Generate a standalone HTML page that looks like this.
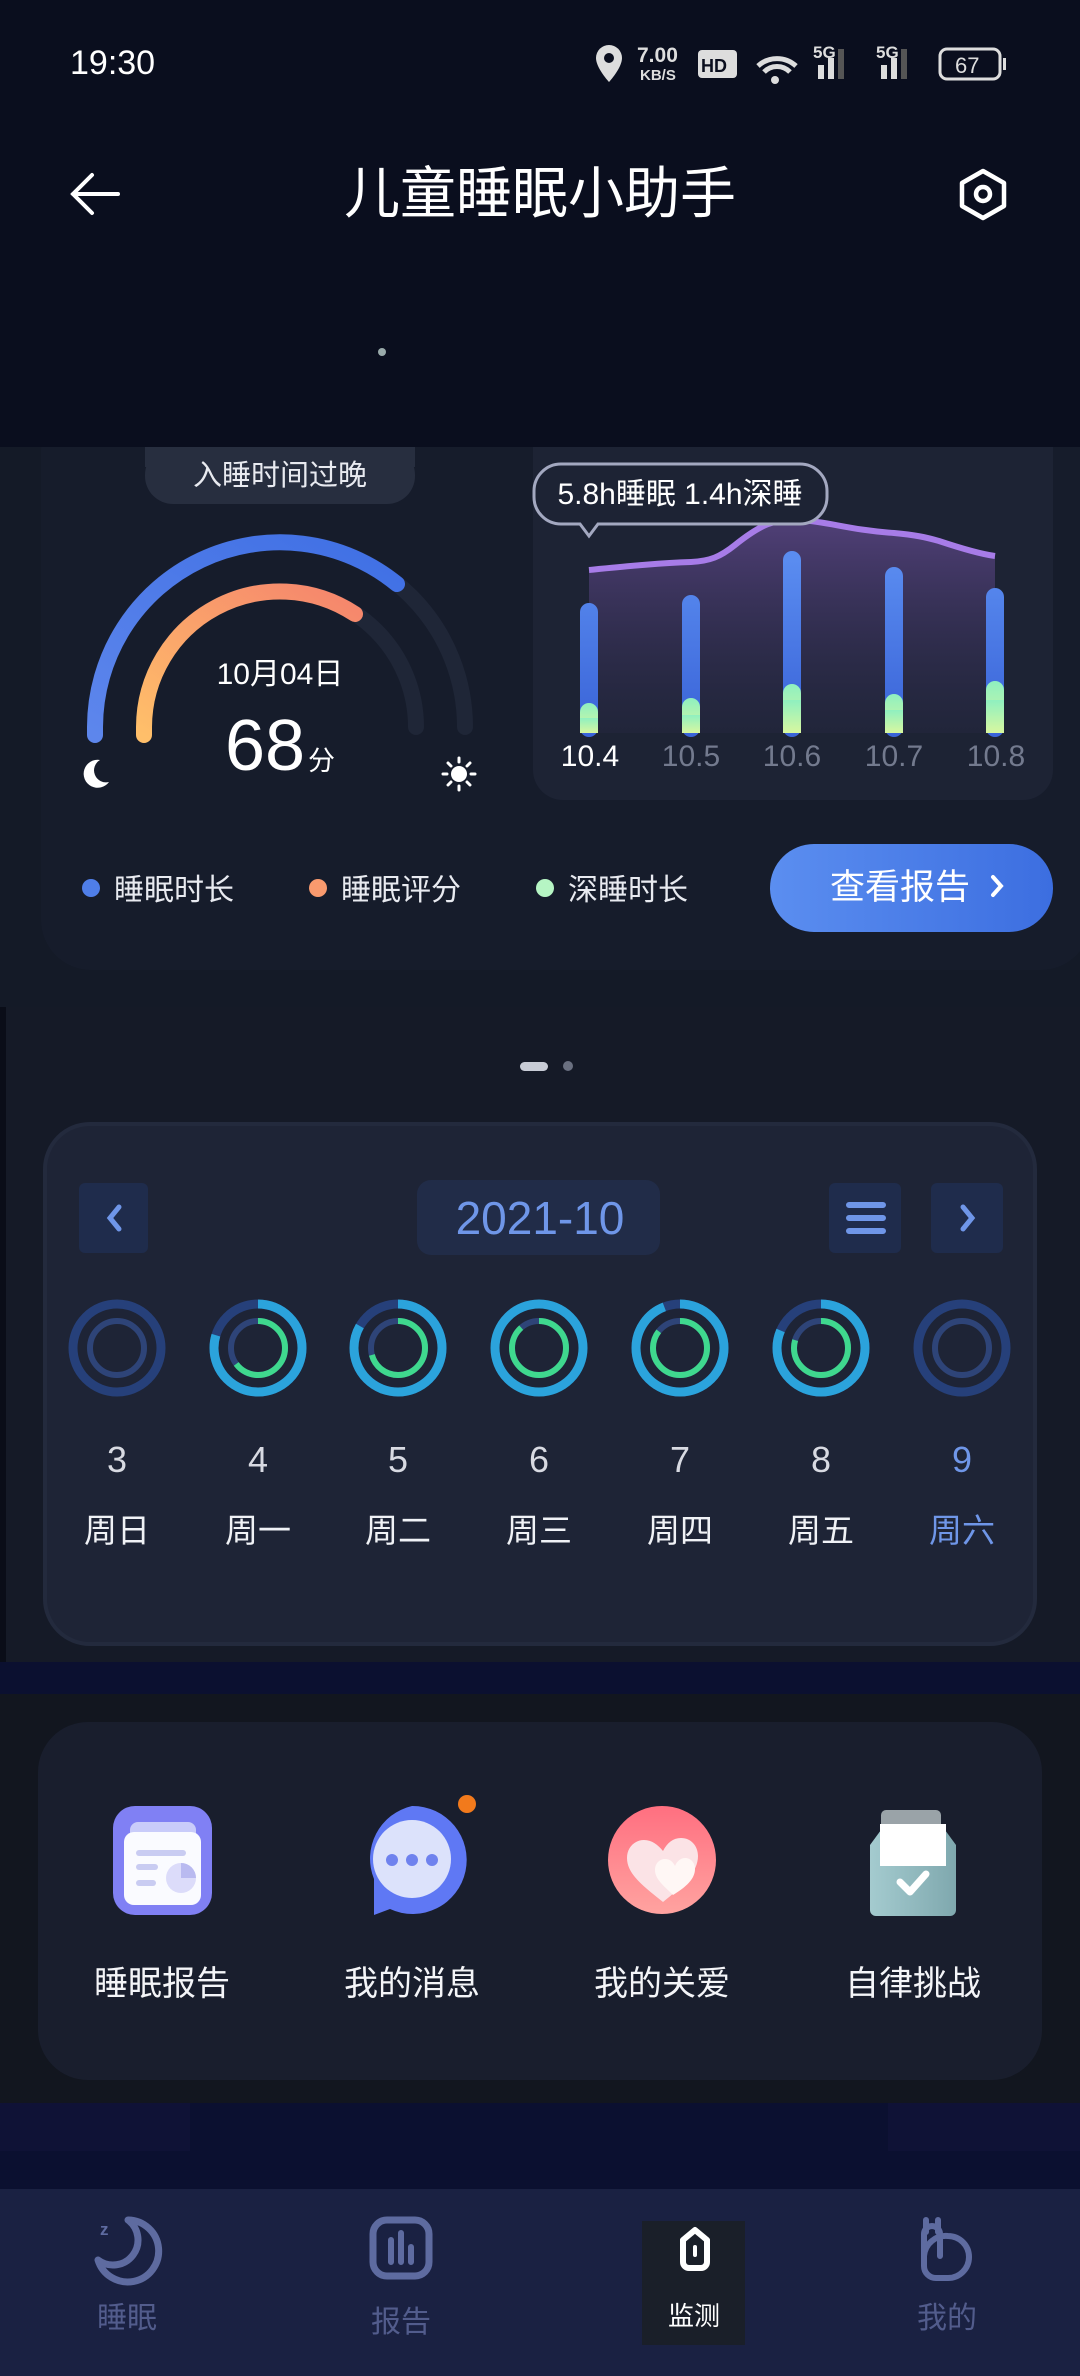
<!DOCTYPE html>
<html><head><meta charset="utf-8"><style>
html,body{margin:0;padding:0;background:#0a0e1e;}
svg{display:block;}
text{font-family:"Liberation Sans","Noto Sans CJK SC",sans-serif;}
</style></head><body>
<svg width="1080" height="2376" viewBox="0 0 1080 2376" xmlns="http://www.w3.org/2000/svg">
<defs>
<linearGradient id="org" x1="0" y1="1" x2="1" y2="0"><stop offset="0" stop-color="#ffbf6a"/><stop offset="1" stop-color="#f5846c"/></linearGradient>
<linearGradient id="blu" x1="0" y1="1" x2="1" y2="0"><stop offset="0" stop-color="#5d86ec"/><stop offset="1" stop-color="#3f6fe4"/></linearGradient>
<linearGradient id="btn" x1="0" y1="0" x2="1" y2="0"><stop offset="0" stop-color="#5b8ef0"/><stop offset="1" stop-color="#3c6ee0"/></linearGradient>
<linearGradient id="bar" x1="0" y1="0" x2="0" y2="1"><stop offset="0" stop-color="#5a8cf0"/><stop offset="1" stop-color="#3a64d8"/></linearGradient>
<linearGradient id="grn" x1="0" y1="0" x2="0" y2="1"><stop offset="0" stop-color="#8ff0c0"/><stop offset="1" stop-color="#d8f7a0"/></linearGradient>
<linearGradient id="area" x1="0" y1="0" x2="0" y2="1"><stop offset="0" stop-color="#5a4584" stop-opacity="0.85"/><stop offset="1" stop-color="#2a2a48" stop-opacity="0.3"/></linearGradient>
<linearGradient id="heart" x1="0" y1="0" x2="0" y2="1"><stop offset="0" stop-color="#ff6f80"/><stop offset="1" stop-color="#ffa3a0"/></linearGradient>
<linearGradient id="box" x1="0" y1="0" x2="1" y2="0"><stop offset="0" stop-color="#a4cbcf"/><stop offset="1" stop-color="#7fa8ae"/></linearGradient>
</defs>

<!-- section 1 -->
<rect x="0" y="447" width="1080" height="560" fill="#141a27"/>
<rect x="41" y="400" width="1050" height="570" rx="50" fill="#161c2b"/>
<rect x="533" y="400" width="520" height="400" rx="30" fill="#1d2334"/>

<!-- top -->
<rect x="0" y="0" width="1080" height="447" fill="#0a0e1e"/>
<text x="70" y="74" font-size="34" fill="#fff">19:30</text>
<path d="M609 45a13 13 0 0 1 13 13c0 10-13 24-13 24s-13-14-13-24a13 13 0 0 1 13-13z" fill="#ddd"/><circle cx="609" cy="58" r="5" fill="#0a0e1e"/>
<text x="637" y="62" font-size="21" fill="#ddd" font-weight="bold">7.00</text>
<text x="640" y="80" font-size="15" fill="#ddd" font-weight="bold">KB/S</text>
<rect x="698" y="50" width="39" height="28" rx="4" fill="#ddd"/><text x="701" y="72" font-size="18" font-weight="bold" fill="#0a0e1e">HD</text>
<path d="M758 66a28 28 0 0 1 38 0M764 72a18 18 0 0 1 26 0" stroke="#ddd" stroke-width="5" fill="none"/><circle cx="775" cy="80" r="4" fill="#ddd"/>
<text x="813" y="58" font-size="17" font-weight="bold" fill="#ddd">5G</text>
<rect x="818" y="65" width="6" height="14" fill="#ddd"/><rect x="828" y="58" width="6" height="21" fill="#ddd"/><rect x="838" y="49" width="6" height="30" fill="#555"/>
<text x="876" y="58" font-size="17" font-weight="bold" fill="#ddd">5G</text>
<rect x="881" y="65" width="6" height="14" fill="#ddd"/><rect x="891" y="58" width="6" height="21" fill="#ddd"/><rect x="901" y="49" width="6" height="30" fill="#555"/>
<rect x="940" y="49" width="60" height="30" rx="7" fill="none" stroke="#ddd" stroke-width="3"/><rect x="1003" y="58" width="3" height="12" fill="#ddd"/>
<text x="955" y="73" font-size="22" fill="#ddd">67</text>

<path d="M118 194H73M92 175L73 194L92 213" stroke="#fff" stroke-width="4" fill="none" stroke-linecap="round"/>
<text x="540" y="213" font-size="56" fill="#fff" text-anchor="middle">儿童睡眠小助手</text>
<path d="M983 171L1004 183V206L983 218L962 206V183Z" stroke="#fff" stroke-width="4.5" fill="none" stroke-linejoin="round"/>
<circle cx="983" cy="194" r="7" stroke="#fff" stroke-width="4.5" fill="none"/>
<circle cx="382" cy="352" r="4" fill="#9aa"/>

<rect x="145" y="447" width="270" height="57" rx="28" fill="#272e3f"/>
<rect x="145" y="447" width="270" height="20" fill="#272e3f"/>
<text x="280" y="485" font-size="29" fill="#e8eaf0" text-anchor="middle">入睡时间过晚</text>
<!-- gauge -->
<path d="M95 727A185 185 0 0 1 465 727" stroke="#1f2637" stroke-width="16" fill="none" stroke-linecap="round"/>
<path d="M144 727A136 136 0 0 1 416 727" stroke="#1f2637" stroke-width="16" fill="none" stroke-linecap="round"/>
<path d="M95 735L95 727A185 185 0 0 1 397 584" stroke="url(#blu)" stroke-width="16" fill="none" stroke-linecap="round"/>
<path d="M144 735L144 727A136 136 0 0 1 355 614" stroke="url(#org)" stroke-width="16" fill="none" stroke-linecap="round"/>
<text x="280" y="684" font-size="30" fill="#fff" text-anchor="middle">10月04日</text>
<text x="265" y="770" font-size="72" fill="#fff" text-anchor="middle">68</text>
<text x="308" y="770" font-size="27" fill="#fff">分</text>
<path d="M100 760a14 14 0 1 0 9 22a12 12 0 0 1 -9 -22z" fill="#fff"/>
<circle cx="459" cy="774" r="8" fill="#fff"/>
<g stroke="#fff" stroke-width="3" stroke-linecap="round"><path d="M459 758v4M459 786v4M443 774h4M471 774h4M448 763l3 3M467 782l3 3M448 785l3-3M467 766l3-3"/></g>
<!-- chart -->
<path d="M589 570C630 566 660 563 691 562C710 561 720 557 735 545C760 525 775 518 800 520C830 522 850 530 894 533C915 535 925 537 939 541C960 548 980 554 995 556L995 733L589 733Z" fill="url(#area)"/>
<path d="M589 570C630 566 660 563 691 562C710 561 720 557 735 545C760 525 775 518 800 520C830 522 850 530 894 533C915 535 925 537 939 541C960 548 980 554 995 556" stroke="#a77ce8" stroke-width="6" fill="none"/>
<g stroke-linecap="round" stroke-width="18">
<path d="M589 612V728M691 604V728M792 560V728M894 576V728M995 597V728" stroke="url(#bar)"/>
</g>
<rect x="580" y="703" width="18" height="30" rx="9" fill="url(#grn)"/><rect x="580" y="718" width="18" height="15" fill="url(#grn)"/>
<rect x="682" y="698" width="18" height="35" rx="9" fill="url(#grn)"/><rect x="682" y="715" width="18" height="18" fill="url(#grn)"/>
<rect x="783" y="684" width="18" height="49" rx="9" fill="url(#grn)"/><rect x="783" y="700" width="18" height="33" fill="url(#grn)"/>
<rect x="885" y="694" width="18" height="39" rx="9" fill="url(#grn)"/><rect x="885" y="710" width="18" height="23" fill="url(#grn)"/>
<rect x="986" y="681" width="18" height="52" rx="9" fill="url(#grn)"/><rect x="986" y="700" width="18" height="33" fill="url(#grn)"/>
<path d="M561 464H800a27 27 0 0 1 27 27v6a27 27 0 0 1 -27 27H598L589 536L580 524H561a27 27 0 0 1 -27 -27v-6a27 27 0 0 1 27 -27Z" fill="#1d2334" stroke="#a3a8c0" stroke-width="3"/>
<text x="680" y="504" font-size="30" fill="#fff" text-anchor="middle">5.8h睡眠 1.4h深睡</text>
<g font-size="30" text-anchor="middle"><text x="590" y="766" fill="#fff">10.4</text><text x="691" y="766" fill="#737a8e">10.5</text><text x="792" y="766" fill="#737a8e">10.6</text><text x="894" y="766" fill="#737a8e">10.7</text><text x="996" y="766" fill="#737a8e">10.8</text></g>
<!-- legend -->
<circle cx="91" cy="888" r="9" fill="#4f7ee8"/><text x="114" y="900" font-size="30" fill="#e8eaf0">睡眠时长</text>
<circle cx="318" cy="888" r="9" fill="#f99a6e"/><text x="341" y="900" font-size="30" fill="#e8eaf0">睡眠评分</text>
<circle cx="545" cy="888" r="9" fill="#b6f5c4"/><text x="568" y="900" font-size="30" fill="#e8eaf0">深睡时长</text>
<rect x="770" y="844" width="283" height="88" rx="44" fill="url(#btn)"/>
<text x="900" y="899" font-size="35" fill="#fff" text-anchor="middle">查看报告</text>
<path d="M993 877l8 9l-8 9" stroke="#fff" stroke-width="4" fill="none" stroke-linecap="round"/>

<!-- section 2 -->
<rect x="0" y="1007" width="1080" height="655" fill="#151a27"/>
<rect x="0" y="1007" width="6" height="655" fill="#0a0d18"/>
<rect x="520" y="1062" width="28" height="9" rx="4.5" fill="#c8ccd6"/><circle cx="568" cy="1066" r="5" fill="#6a7080"/>
<rect x="45" y="1124" width="990" height="520" rx="45" fill="#1e2436" stroke="#232a3d" stroke-width="4"/>
<rect x="79" y="1183" width="69" height="70" rx="6" fill="#1f2c4c"/>
<path d="M119 1207l-9 11l9 11" stroke="#6f96e8" stroke-width="5" fill="none" stroke-linecap="round"/>
<rect x="417" y="1180" width="243" height="75" rx="14" fill="#212c48"/>
<text x="540" y="1234" font-size="46" fill="#6f96e8" text-anchor="middle">2021-10</text>
<rect x="829" y="1183" width="72" height="70" rx="6" fill="#1f2c4c"/>
<path d="M849 1205h34M849 1218h34M849 1231h34" stroke="#6f96e8" stroke-width="6" stroke-linecap="round"/>
<rect x="931" y="1183" width="72" height="70" rx="6" fill="#1f2c4c"/>
<path d="M963 1207l9 11l-9 11" stroke="#6f96e8" stroke-width="5" fill="none" stroke-linecap="round"/>
<g fill="none">
<circle cx="117" cy="1348" r="44" stroke="#26407a" stroke-width="9"/><circle cx="117" cy="1348" r="27" stroke="#2e4478" stroke-width="6"/>
<circle cx="962" cy="1348" r="44" stroke="#26407a" stroke-width="9"/><circle cx="962" cy="1348" r="27" stroke="#2e4478" stroke-width="6"/>
</g>
<g fill="none">
<g transform="translate(258 1348)"><circle r="44" stroke="#26407a" stroke-width="9"/><circle r="44" stroke="#2ba3dc" stroke-width="9" stroke-dasharray="220 300" transform="rotate(-90)"/><circle r="27" stroke="#2e4478" stroke-width="6"/><circle r="27" stroke="#3fd88e" stroke-width="6" stroke-dasharray="110 200" transform="rotate(-90)"/></g>
<g transform="translate(398 1348)"><circle r="44" stroke="#26407a" stroke-width="9"/><circle r="44" stroke="#2ba3dc" stroke-width="9" stroke-dasharray="230 300" transform="rotate(-90)"/><circle r="27" stroke="#2e4478" stroke-width="6"/><circle r="27" stroke="#3fd88e" stroke-width="6" stroke-dasharray="120 200" transform="rotate(-90)"/></g>
<g transform="translate(539 1348)"><circle r="44" stroke="#2ba3dc" stroke-width="9"/><circle r="27" stroke="#2e4478" stroke-width="6"/><circle r="27" stroke="#3fd88e" stroke-width="6" stroke-dasharray="150 200" transform="rotate(-90)"/></g>
<g transform="translate(680 1348)"><circle r="44" stroke="#26407a" stroke-width="9"/><circle r="44" stroke="#2ba3dc" stroke-width="9" stroke-dasharray="260 300" transform="rotate(-90)"/><circle r="27" stroke="#2e4478" stroke-width="6"/><circle r="27" stroke="#3fd88e" stroke-width="6" stroke-dasharray="145 200" transform="rotate(-90)"/></g>
<g transform="translate(821 1348)"><circle r="44" stroke="#26407a" stroke-width="9"/><circle r="44" stroke="#2ba3dc" stroke-width="9" stroke-dasharray="225 300" transform="rotate(-90)"/><circle r="27" stroke="#2e4478" stroke-width="6"/><circle r="27" stroke="#3fd88e" stroke-width="6" stroke-dasharray="135 200" transform="rotate(-90)"/></g>
</g>
<g font-size="36" fill="#d8dae2" text-anchor="middle">
<text x="117" y="1472">3</text><text x="258" y="1472">4</text><text x="398" y="1472">5</text><text x="539" y="1472">6</text><text x="680" y="1472">7</text><text x="821" y="1472">8</text><text x="962" y="1472" fill="#6f96e8">9</text>
</g>
<g font-size="33" fill="#f0f2f6" text-anchor="middle">
<text x="117" y="1542">周日</text><text x="258" y="1542">周一</text><text x="398" y="1542">周二</text><text x="539" y="1542">周三</text><text x="680" y="1542">周四</text><text x="821" y="1542">周五</text><text x="962" y="1542" fill="#6f96e8">周六</text>
</g>

<rect x="0" y="1662" width="1080" height="32" fill="#0b1030"/>
<rect x="0" y="1694" width="1080" height="409" fill="#12161f"/>
<rect x="38" y="1722" width="1004" height="358" rx="50" fill="#191e2d"/>
<rect x="113" y="1806" width="99" height="109" rx="22" fill="#8080f4"/>
<rect x="130" y="1822" width="66" height="22" rx="8" fill="#c9ccfa"/>
<rect x="124" y="1832" width="77" height="73" rx="10" fill="#fafbff"/>
<rect x="136" y="1850" width="50" height="6" rx="3" fill="#c9ccf2"/><rect x="136" y="1864" width="22" height="6" rx="3" fill="#c9ccf2"/><rect x="136" y="1880" width="20" height="6" rx="3" fill="#c9ccf2"/>
<circle cx="181" cy="1878" r="15" fill="#dcdcfa"/><path d="M181 1878V1863A15 15 0 0 1 196 1878Z" fill="#b9baf0"/>
<path d="M412 1806a54 54 0 1 1 -22 103l-16 6v-36a54 54 0 0 1 38 -73z" fill="#5f78f4"/>
<ellipse cx="412" cy="1859" rx="39" ry="39" fill="#dce2fb"/>
<circle cx="392" cy="1860" r="6" fill="#6f82ee"/><circle cx="412" cy="1860" r="6" fill="#6f82ee"/><circle cx="432" cy="1860" r="6" fill="#6f82ee"/>
<circle cx="467" cy="1804" r="9" fill="#f27a1c"/>
<ellipse cx="662" cy="1860" rx="54" ry="54" fill="url(#heart)"/>
<path d="M663 1902c-20-16-36-28-36-44c0-11 8-18 17-18c8 0 14 5 19 11c4-8 10-13 18-13c10 0 17 8 17 18c0 16-15 30-35 46z" fill="#fbe3e6"/>
<path d="M673 1895c-10-10-18-16-18-25c0-7 5-11 10-11c5 0 8 3 10 7c2-5 6-8 10-8c6 0 10 5 10 11c0 10-9 18-22 26z" fill="#fff7f5"/>
<rect x="881" y="1810" width="60" height="20" rx="5" fill="#9aa3a8"/>
<path d="M870 1845L881 1830H945L956 1845V1910a6 6 0 0 1 -6 6H876a6 6 0 0 1 -6 -6Z" fill="url(#box)"/>
<rect x="880" y="1824" width="66" height="42" fill="#fff"/>
<path d="M900 1882l10 10l16 -18" stroke="#fff" stroke-width="7" fill="none" stroke-linecap="round" stroke-linejoin="round"/>
<g font-size="34" fill="#f4f5f8" text-anchor="middle">
<text x="162" y="1995">睡眠报告</text><text x="412" y="1995">我的消息</text><text x="662" y="1995">我的关爱</text><text x="913" y="1995">自律挑战</text>
</g>

<rect x="0" y="2103" width="1080" height="86" fill="#0b1030"/>
<rect x="0" y="2103" width="190" height="48" fill="#0f1236"/>
<rect x="888" y="2103" width="192" height="48" fill="#0f1236"/>

<rect x="0" y="2189" width="1080" height="187" fill="#1a2142"/>
<path d="M128 2220a31 31 0 1 1 -30 40a25 25 0 0 0 30 -40z" stroke="#5e6ba0" stroke-width="7" fill="none" stroke-linejoin="round"/>
<text x="100" y="2235" font-size="17" font-weight="bold" fill="#5e6ba0">z</text>
<rect x="373" y="2220" width="56" height="56" rx="14" stroke="#5e6ba0" stroke-width="7" fill="none"/>
<path d="M391 2240v22M401 2233v29M411 2247v15" stroke="#5e6ba0" stroke-width="6" stroke-linecap="round"/>
<rect x="642" y="2221" width="103" height="124" fill="#1a1f29"/>
<path d="M683 2240l12 -10l12 10v22a6 6 0 0 1 -6 6h-12a6 6 0 0 1 -6 -6z" stroke="#fff" stroke-width="6" fill="none" stroke-linejoin="round"/>
<path d="M695 2247v8" stroke="#fff" stroke-width="4" stroke-linecap="round"/>
<text x="694" y="2325" font-size="26" fill="#fff" text-anchor="middle">监测</text>
<path d="M924 2256v-22a8 8 0 0 1 16 0v22M938 2232v-12M926 2232v-12" stroke="#5e6ba0" stroke-width="6" fill="none" stroke-linecap="round"/>
<path d="M924 2256a22 22 0 0 1 24 -20a20 20 0 1 1 0 42h-12a12 12 0 0 1 -12 -12z" stroke="#5e6ba0" stroke-width="6" fill="none"/>
<g font-size="30" fill="#525c8c" text-anchor="middle">
<text x="127" y="2328">睡眠</text><text x="401" y="2332">报告</text><text x="947" y="2328">我的</text>
</g>
</svg>
</body></html>
